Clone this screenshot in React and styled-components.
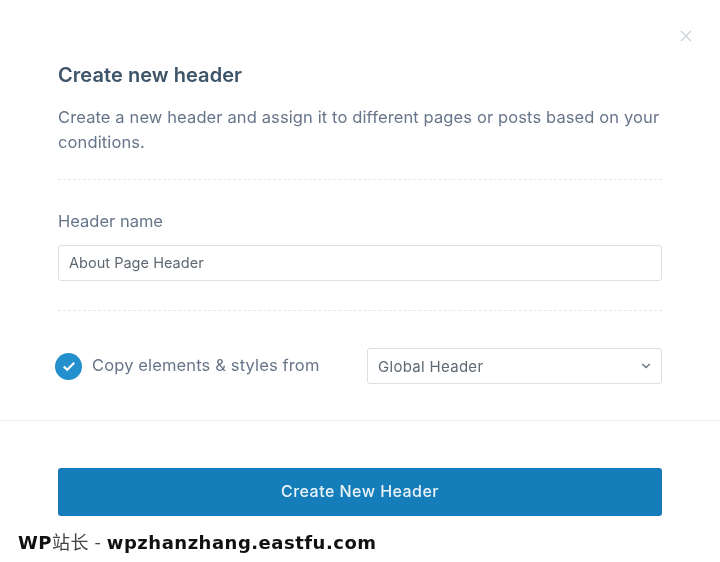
import React from "react";
import styled, { createGlobalStyle } from "styled-components";

const Global = createGlobalStyle`
  html, body { margin: 0; padding: 0; background: #fff; }
  body { font-family: Inter, "Noto Sans", sans-serif; width: 720px; height: 562px; overflow: hidden; }
  * { box-sizing: border-box; }
`;

const Page = styled.div`
  position: relative;
  width: 720px;
  height: 562px;
  background: #fff;
  display: flex;
  flex-direction: column;
  filter: blur(0.45px);
`;

const CloseButton = styled.div`
  position: absolute;
  top: 30px;
  right: 28px;
  width: 12px;
  height: 12px;
  display: flex;
`;

const Top = styled.div`
  padding: 62px 58px 0;
  height: 420px;
`;

const Title = styled.h2`
  margin: 0;
  font-size: 20px;
  line-height: 26px;
  font-weight: 600;
  letter-spacing: 0.06px;
  color: #3e5468;
`;

const Description = styled.p`
  margin: 17px 0 0;
  font-size: 16.5px;
  line-height: 25px;
  font-weight: 400;
  letter-spacing: 0.12px;
  color: #67758a;
`;

const Dashed = styled.div`
  border-top: 1px dashed #e6e9ec;
  margin-top: ${(p) => p.$mt}px;
`;

const Label = styled.label`
  display: block;
  margin-top: 31px;
  font-size: 16.5px;
  line-height: 20px;
  color: #67758a;
`;

const Field = styled.div`
  margin-top: 14px;
  height: 36px;
  padding: 0 10px 2px;
  border: 1px solid #dcdfe3;
  border-radius: 3px;
  display: flex;
  align-items: center;
  font-size: 14.5px;
  letter-spacing: 0.03px;
  color: #5f6974;
`;

const CopyRow = styled.div`
  margin-top: 37px;
  margin-left: -3px;
  display: flex;
  align-items: center;
`;

const Check = styled.span`
  width: 27px;
  height: 27px;
  border-radius: 50%;
  background: #2390cd;
  display: flex;
  align-items: center;
  justify-content: center;
  flex: none;
`;

const CopyLabel = styled.span`
  margin-left: 10px;
  width: 275px;
  font-size: 16.5px;
  line-height: 20px;
  letter-spacing: 0.14px;
  color: #67758a;
  position: relative;
  top: -1px;
`;

const SelectBox = styled.div`
  flex: 1;
  height: 36px;
  border: 1px solid #dcdfe3;
  border-radius: 3px;
  padding: 0 10px;
  display: flex;
  align-items: center;
  justify-content: space-between;
  font-size: 15px;
  letter-spacing: 0.3px;
  color: #5f6974;
`;

const Footer = styled.div`
  border-top: 1px solid #e9ebee;
  padding: 47px 58px 0;
`;

const Primary = styled.div`
  height: 48px;
  padding-bottom: 2px;
  background: #147dba;
  border-radius: 3px;
  color: #e9f3f9;
  font-size: 16px;
  font-weight: 500;
  letter-spacing: 0.47px;
  display: flex;
  align-items: center;
  justify-content: center;
`;

const Watermark = styled.div`
  margin: 14px 0 0 18px;
  font-family: "DejaVu Sans", "Noto Sans CJK SC", sans-serif;
  font-size: 18px;
  line-height: 22px;
  font-weight: 700;
  letter-spacing: 0.5px;
  color: #111;
  white-space: nowrap;
`;

const Thin = styled.span`
  font-family: "Noto Sans CJK SC", sans-serif;
  font-weight: 400;
  letter-spacing: 0.5px;
  word-spacing: 1px;
  color: #444;
`;

export default function App() {
  return (
    <Page>
      <Global />
      <CloseButton>
        <svg width="12" height="12" viewBox="0 0 12 12" fill="none">
          <path d="M1 1l10 10M11 1L1 11" stroke="#c9d0d6" strokeWidth="1.3" />
        </svg>
      </CloseButton>
      <Top>
        <Title>Create new header</Title>
        <Description>
          Create a new header and assign it to different pages or posts based on your conditions.
        </Description>
        <Dashed $mt={24} />
        <Label>Header name</Label>
        <Field>About Page Header</Field>
        <Dashed $mt={29} />
        <CopyRow>
          <Check>
            <svg width="14" height="11" viewBox="0 0 14 11" fill="none">
              <path d="M1.8 5.6l3.5 3.2L12.2 1.8" stroke="#fff" strokeWidth="2.2" />
            </svg>
          </Check>
          <CopyLabel>Copy elements &amp; styles from</CopyLabel>
          <SelectBox>
            Global Header
            <svg width="10" height="6" viewBox="0 0 10 6" fill="none">
              <path d="M1.2 1l3.8 3.6L8.8 1" stroke="#6b7580" strokeWidth="1.4" />
            </svg>
          </SelectBox>
        </CopyRow>
      </Top>
      <Footer>
        <Primary>Create New Header</Primary>
      </Footer>
      <Watermark>
        WP<Thin>站长 - </Thin>wpzhanzhang.eastfu.com
      </Watermark>
    </Page>
  );
}
